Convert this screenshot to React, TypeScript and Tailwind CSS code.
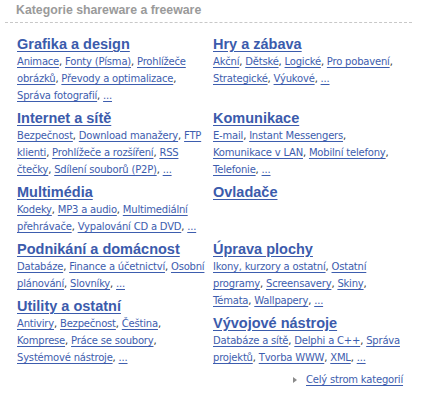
import React from "react";

type Section = {
  title: string;
  items: string[];
  breaks?: number[];
};

const link = "text-[#3d5dae] underline underline-offset-2 decoration-1";

const row1: Section[] = [
  { title: "Grafika a design", items: ["Animace", "Fonty (Písma)", "Prohlížeče|obrázků", "Převody a optimalizace", "Správa fotografií", "..."], breaks: [3] },
  { title: "Hry a zábava", items: ["Akční", "Dětské", "Logické", "Pro pobavení", "Strategické", "Výukové", "..."], breaks: [3] },
];
const row2: Section[] = [
  { title: "Internet a sítě", items: ["Bezpečnost", "Download manažery", "FTP|klienti", "Prohlížeče a rozšíření", "RSS|čtečky", "Sdílení souborů (P2P)", "..."] },
  { title: "Komunikace", items: ["E-mail", "Instant Messengers", "Komunikace v LAN", "Mobilní telefony", "Telefonie", "..."], breaks: [1, 3] },
];
const row3: Section[] = [
  { title: "Multimédia", items: ["Kodeky", "MP3 a audio", "Multimediální|přehrávače", "Vypalování CD a DVD", "..."] },
  { title: "Ovladače", items: [] },
];
const leftTail: Section[] = [
  { title: "Podnikání a domácnost", items: ["Databáze", "Finance a účetnictví", "Osobní|plánování", "Slovníky", "..."] },
  { title: "Utility a ostatní", items: ["Antiviry", "Bezpečnost", "Čeština", "Komprese", "Práce se soubory", "Systémové nástroje", "..."], breaks: [2, 4] },
];
const rightTail: Section[] = [
  { title: "Úprava plochy", items: ["Ikony, kurzory a ostatní", "Ostatní|programy", "Screensavery", "Skiny", "Témata", "Wallpapery", "..."], breaks: [3] },
  { title: "Vývojové nástroje", items: ["Databáze a sítě", "Delphi a C++", "Správa|projektů", "Tvorba WWW", "XML", "..."] },
];

function Category({ s }: { s: Section }) {
  return (
    <div className="pb-[5px]">
      <a href="#" className="block font-['Liberation_Sans',Arial,sans-serif] text-[14.5px] font-bold leading-[18px] text-[#3b5bac] underline underline-offset-2">
        {s.title}
      </a>
      {s.items.length > 0 && (
        <div className="whitespace-nowrap font-['DejaVu_Sans',Verdana,sans-serif] text-[10px] leading-[17px] tracking-[-0.2px] text-[#333]">
          {s.items.map((it, i) => {
            const parts = it.split("|");
            const last = i === s.items.length - 1;
            const br = s.breaks?.includes(i);
            return (
              <React.Fragment key={i}>
                <a href="#" className={link}>
                  {parts.map((p, j) => (
                    <React.Fragment key={j}>
                      {j > 0 && <br />}
                      {p}
                    </React.Fragment>
                  ))}
                </a>
                {!last && (br ? <>,<br /></> : ", ")}
              </React.Fragment>
            );
          })}
        </div>
      )}
    </div>
  );
}

export default function App() {
  return (
    <div className="h-[394px] w-[430px] overflow-hidden bg-white">
      {/* Header */}
      <div className="ml-[5px] w-[407px] border-b border-dashed border-[#c8c8c8] pb-[4px] pl-[11px] pt-[2px]">
        <h2 className="font-['Liberation_Sans',Arial,sans-serif] text-[12.3px] font-bold leading-[16px] text-[#9a9a9a]">
          Kategorie shareware a freeware
        </h2>
      </div>

      <div className="mt-[12px] pl-[17px]">
        {[row1, row2, row3].map((row, i) => (
          <div key={i} className="grid grid-cols-[196px_1fr]">
            <Category s={row[0]} />
            <Category s={row[1]} />
          </div>
        ))}
        <div className="grid grid-cols-[196px_1fr]">
          <div>
            {leftTail.map((s) => (
              <Category key={s.title} s={s} />
            ))}
          </div>
          <div>
            {rightTail.map((s) => (
              <Category key={s.title} s={s} />
            ))}
            <div className="flex items-center pl-[80px] font-['DejaVu_Sans',Verdana,sans-serif] text-[10px] leading-[17px] tracking-[-0.2px]">
              <svg width="4" height="6" viewBox="0 0 4 6" className="mr-[9px]">
                <path d="M0 0L4 3L0 6Z" fill="#8a8a8a" />
              </svg>
              <a href="#" className={link}>Celý strom kategorií</a>
            </div>
          </div>
        </div>
      </div>
    </div>
  );
}
